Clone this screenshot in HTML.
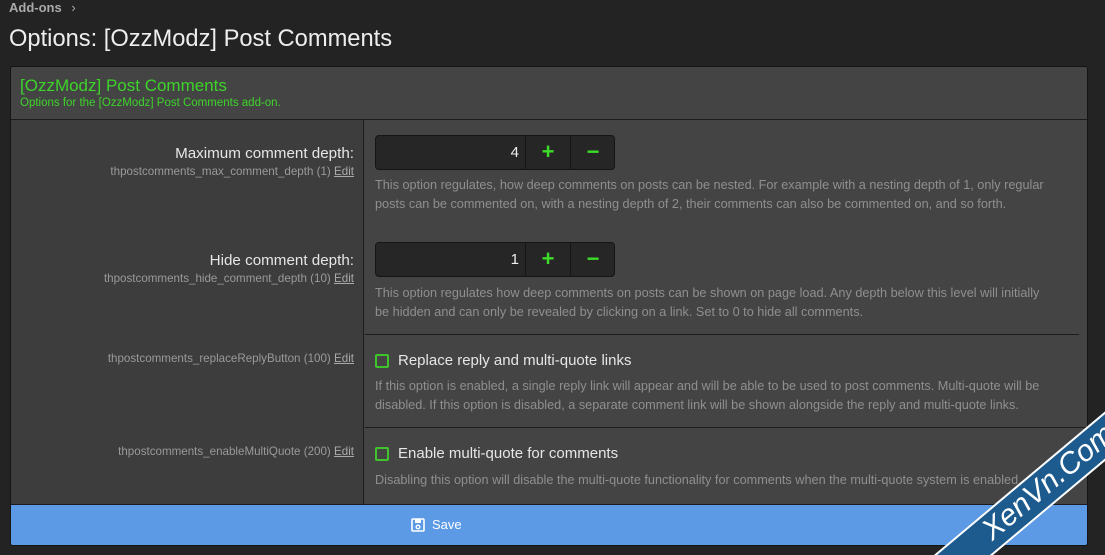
<!DOCTYPE html>
<html style="width:1105px;height:555px;overflow:hidden"><head><meta charset="utf-8"><style>
*{margin:0;padding:0;box-sizing:border-box}
body{width:1105px;height:555px;background:#232323;font-family:"Liberation Sans",sans-serif;position:relative;overflow:hidden;color:#ddd}
.a{position:absolute;white-space:nowrap}
.panel{position:absolute;left:10px;top:66px;width:1078px;height:480px;border:1px solid #141414;border-radius:3px;overflow:hidden;background:#444}
.left{position:absolute;left:0;top:53px;width:353px;height:385px;background:#3d3d3d;border-right:1px solid #1c1c1c}
.lbl{position:absolute;right:0;text-align:right;font-size:15.2px;color:#e6e6e6}
.hint{position:absolute;right:0;text-align:right;font-size:11.6px;color:#9a9a9a}
.hint u{color:#aaa}
.desc{position:absolute;font-size:12.7px;line-height:19px;color:#8f8f8f;width:700px}
.spin{position:absolute;left:375px;width:240px;height:35px;background:#262626;border:1px solid #151515;border-radius:4px}
.spin .v{position:absolute;right:95px;top:8px;font-size:15px;color:#eee}
.spin .b{position:absolute;top:0;width:45px;height:33px;border-left:1px solid #151515;color:#3ddc28;font-size:22px;font-weight:bold;text-align:center;line-height:31px}
.cb{position:absolute;left:375px;width:14px;height:14px;border:2px solid #3ec52c;border-radius:2px}
.ct{position:absolute;left:398px;font-size:15px;color:#e6e6e6}
</style></head><body>
<div class="a" style="left:9px;top:0;font-size:13px;font-weight:bold;color:#aaa">Add-ons <span style="font-weight:normal;margin-left:6px">›</span></div>
<div class="a" style="left:9px;top:26px;font-size:23.7px;color:#eee">Options: [OzzModz] Post Comments</div>
<div class="panel">
  <div style="position:absolute;left:0;top:0;width:100%;height:53px;background:#444;border-bottom:1px solid #1c1c1c"></div>
  <div class="a" style="left:9px;top:9px;font-size:17px;color:#3dd42a">[OzzModz] Post Comments</div>
  <div class="a" style="left:9px;top:30px;font-size:11.5px;color:#3dd42a">Options for the [OzzModz] Post Comments add-on.</div>
  <div class="left"></div>
  <div style="position:absolute;left:354px;top:267px;width:714px;height:1px;background:#1c1c1c"></div>
  <div style="position:absolute;left:354px;top:360px;width:724px;height:1px;background:#1c1c1c"></div>
  <div style="position:absolute;left:0;top:437px;width:100%;height:43px;background:#5c9ae6;border-top:1px solid #1c1c1c"></div>
</div>
<div class="lbl" style="left:0;top:145px;width:354px">Maximum comment depth:</div>
<div class="hint" style="left:0;top:165px;width:354px">thpostcomments_max_comment_depth (1) <u>Edit</u></div>
<div class="lbl" style="left:0;top:252px;width:354px">Hide comment depth:</div>
<div class="hint" style="left:0;top:272px;width:354px">thpostcomments_hide_comment_depth (10) <u>Edit</u></div>
<div class="hint" style="left:0;top:352px;width:354px">thpostcomments_replaceReplyButton (100) <u>Edit</u></div>
<div class="hint" style="left:0;top:445px;width:354px">thpostcomments_enableMultiQuote (200) <u>Edit</u></div>

<div class="spin" style="top:135px"><span class="v">4</span><div class="b" style="left:149px">+</div><div class="b" style="left:194px">−</div></div>
<div class="desc" style="left:375px;top:176px">This option regulates, how deep comments on posts can be nested. For example with a nesting depth of 1, only regular posts can be commented on, with a nesting depth of 2, their comments can also be commented on, and so forth.</div>
<div class="spin" style="top:242px"><span class="v">1</span><div class="b" style="left:149px">+</div><div class="b" style="left:194px">−</div></div>
<div class="desc" style="left:375px;top:284px">This option regulates how deep comments on posts can be shown on page load. Any depth below this level will initially<br>be hidden and can only be revealed by clicking on a link. Set to 0 to hide all comments.</div>
<div class="cb" style="top:354px"></div><div class="ct" style="top:352px">Replace reply and multi-quote links</div>
<div class="desc" style="left:375px;top:377px">If this option is enabled, a single reply link will appear and will be able to be used to post comments. Multi-quote will be disabled. If this option is disabled, a separate comment link will be shown alongside the reply and multi-quote links.</div>
<div class="cb" style="top:447px"></div><div class="ct" style="top:445px">Enable multi-quote for comments</div>
<div class="desc a" style="left:375px;top:471px;width:700px;overflow:hidden">Disabling this option will disable the multi-quote functionality for comments when the multi-quote system is enabled.</div>

<svg class="a" style="left:411px;top:518px" width="14" height="14" viewBox="0 0 14 14"><rect x="1" y="1" width="12" height="12" rx="1" fill="none" stroke="#fff" stroke-width="1.6"/><rect x="4" y="1.5" width="6" height="3.5" fill="#fff"/><circle cx="7" cy="9" r="1.8" fill="none" stroke="#fff" stroke-width="1.4"/></svg>
<div class="a" style="left:432px;top:517px;font-size:13px;color:#fff">Save</div>

<div class="a" style="left:922px;top:565px;width:300px;height:38px;background:#1d5b8e;border:2px solid #fff;transform:rotate(-40deg);transform-origin:left top;color:#fff;font-size:30px;line-height:32px;text-align:center;font-style:italic">XenVn.Com</div>
</body></html>
